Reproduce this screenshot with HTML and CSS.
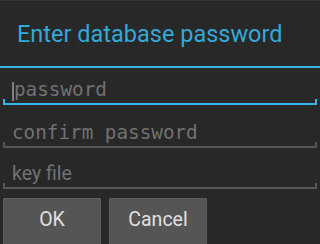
FILE: index.html
```html
<!DOCTYPE html>
<html lang="en">
<head>
  <meta charset="UTF-8" />
  <title>Enter database password</title>
  <link rel="stylesheet" href="styles.css">
</head>
<body>
  <div class="dialog">
    <div class="dialog-title">Enter database password</div>

    <div class="fields">
      <div class="field focused">
        <span class="cursor"></span>
        <span class="hint mono">password</span>
      </div>
      <div class="field second">
        <span class="hint mono">confirm password</span>
      </div>
      <div class="field third">
        <span class="hint">key file</span>
      </div>
    </div>

    <div class="buttons">
      <button class="btn">OK</button>
      <button class="btn">Cancel</button>
    </div>
  </div>
</body>
</html>
```

FILE: styles.css
```css
:root {
  --bg: #282828;
  --holo: #33b5e5;
  --hint: #717171;
  --line: #565656;
  --btn: #555555;
  --font: 'Roboto', 'Noto Sans', sans-serif;
  --mono: 'DejaVu Sans Mono', monospace;
}

body {
  margin: 0;
  background: var(--bg);
  font-family: var(--font);
  overflow: hidden;
}

.dialog {
  width: 320px;
  height: 244px;
  border-top: 1px solid #363636;
  box-sizing: border-box;
}

.dialog-title {
  height: 67px;
  display: flex;
  align-items: center;
  padding-left: 17px;
  padding-top: 1px;
  font-size: 23.5px;
  color: #33a9d8;
  border-bottom: 2px solid var(--holo);
  box-sizing: border-box;
}

.fields {
  padding: 0 3px;
}

.field {
  position: relative;
  display: flex;
  align-items: flex-end;
  height: 37px;
  padding-left: 9px;
  padding-bottom: 4px;
  border-bottom: 2px solid var(--line);
  box-sizing: border-box;
}

.field::before,
.field::after {
  content: '';
  position: absolute;
  bottom: 0;
  width: 2px;
  height: 4px;
  background: var(--line);
}

.field::before { left: 0; }
.field::after { right: 0; }

.field.focused {
  border-bottom-color: var(--holo);
}

.field.focused::before,
.field.focused::after {
  background: var(--holo);
}

.field.second { height: 43px; }
.field.third { height: 41px; }

.hint {
  color: var(--hint);
  font-size: 19.5px;
  line-height: 1;
}

.hint.mono {
  font-family: var(--mono);
  font-size: 19.3px;
}

.cursor {
  width: 2px;
  height: 19px;
  background: #808080;
  margin-bottom: -2px;
}

.buttons {
  display: flex;
  gap: 8px;
  padding: 9px 3px 0;
}

.btn {
  width: 98px;
  height: 48px;
  background: var(--btn);
  border: 1px solid #5e5e5e;
  border-radius: 1px;
  color: #e0e0e0;
  font-family: var(--font);
  font-size: 19.5px;
  padding: 0 0 5px;
}
```
